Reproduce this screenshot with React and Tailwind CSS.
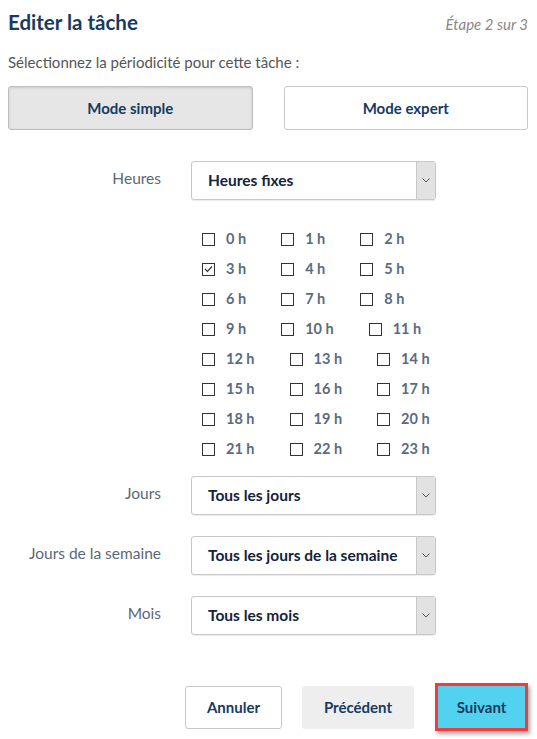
import React from 'react';

const font = { fontFamily: 'Lato, "Noto Sans", sans-serif' };

const Select = ({ value }) => (
    <div className="relative w-[245px] h-[39px] border border-[#c8c8c8] rounded-[3px] bg-white flex items-center shadow-[0_1px_1px_rgba(0,0,0,0.08)]">
        <span className="pl-4 text-[15.5px] font-bold text-[#14243a]">{value}</span>
        <div className="absolute right-0 top-0 bottom-0 w-[19px] bg-[#e2e2e2] border-l border-[#c8c8c8] flex items-center justify-center">
            <svg width="8" height="5" viewBox="0 0 8 5"><path d="M0.5 0.5 L4 4 L7.5 0.5" fill="none" stroke="#555" strokeWidth="1" /></svg>
        </div>
    </div>
);

const Row = ({ label, children }) => (
    <div className="flex items-center">
        <div className="w-[153px] text-right text-[15.5px] text-[#5a6878] -mt-[4px]">{label}</div>
        <div className="ml-[30px]">{children}</div>
    </div>
);

const HourBox = ({ h, checked }) => (
    <div className="flex items-center mr-[35px]">
        <div className="w-[13px] h-[13px] border border-[#333] bg-white flex items-center justify-center">
            {checked && (
                <svg width="9" height="8" viewBox="0 0 9 8"><path d="M1 4 L3.5 6.5 L8 1.5" fill="none" stroke="#333" strokeWidth="1.2" /></svg>
            )}
        </div>
        <span className="ml-[11px] text-[14.5px] font-bold text-[#5b6b80]">{h} h</span>
    </div>
);

const hours = Array.from({ length: 8 }, (_, r) => [r * 3, r * 3 + 1, r * 3 + 2]);

export default function App() {
    return (
        <div className="w-[537px] h-[739px] bg-white px-[8px] pt-[7px]" style={font}>
            <div className="flex items-baseline justify-between pr-[1px]">
                <h1 className="text-[20.5px] font-bold text-[#173a63]">Editer la tâche</h1>
                <span className="text-[15px] italic text-[#888]">Étape 2 sur 3</span>
            </div>
            <p className="mt-[13px] text-[15px] text-[#555]">Sélectionnez la périodicité pour cette tâche :</p>
            <div className="mt-[13px] flex gap-[31px] pr-[1px]">
                <button className="flex-1 h-[44px] rounded-[3px] border border-[#bdbdbd] bg-[#e6e6e6] shadow-[inset_0_1px_3px_rgba(0,0,0,0.12)] text-[15px] font-bold text-[#173a63]">Mode simple</button>
                <button className="flex-1 h-[44px] rounded-[3px] border border-[#c8c8c8] bg-white text-[15px] font-bold text-[#173a63]">Mode expert</button>
            </div>

            <div className="mt-[31px]">
                <Row label="Heures"><Select value="Heures fixes" /></Row>
            </div>

            <div className="ml-[194px] mt-[30px] flex flex-col gap-[12px]">
                {hours.map((row, i) => (
                    <div key={i} className="flex h-[18px]">
                        {row.map((h) => <HourBox key={h} h={h} checked={h === 3} />)}
                    </div>
                ))}
            </div>

            <div className="mt-[18px] flex flex-col gap-[21px]">
                <Row label="Jours"><Select value="Tous les jours" /></Row>
                <Row label="Jours de la semaine"><Select value="Tous les jours de la semaine" /></Row>
                <Row label="Mois"><Select value="Tous les mois" /></Row>
            </div>

            <div className="mt-[48px] flex justify-end items-center pr-[1px]">
                <button className="w-[97px] h-[43px] rounded-[3px] border border-[#c8c8c8] bg-white text-[15px] font-bold text-[#173a63]">Annuler</button>
                <button className="ml-[20px] w-[112px] h-[43px] rounded-[3px] bg-[#eeeeee] text-[15px] font-bold text-[#173a63]">Précédent</button>
                <button className="ml-[21px] w-[93px] h-[48px] border-[3px] border-[#ee3d3d] bg-[#52d2ee] shadow-[2px_3px_4px_rgba(0,0,0,0.35)] text-[15px] font-bold text-[#173a63]">Suivant</button>
            </div>
        </div>
    );
}
